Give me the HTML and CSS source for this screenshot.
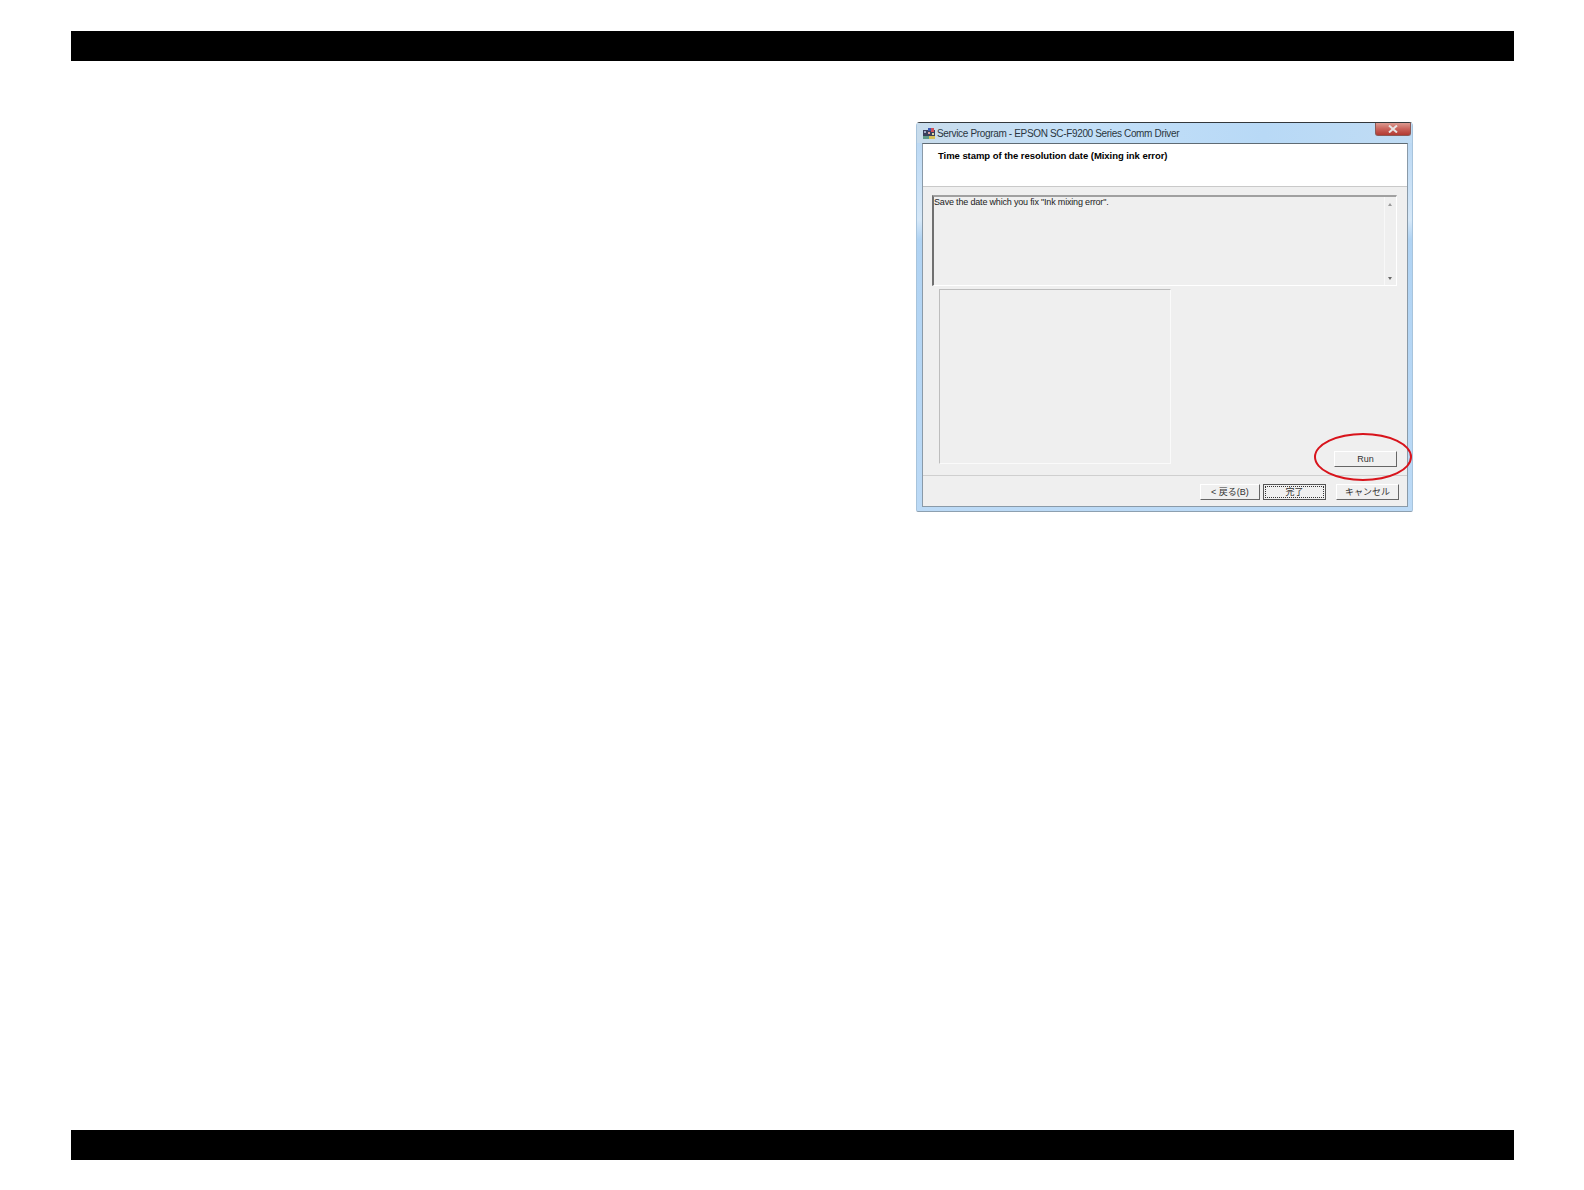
FILE: index.html
```html
<!DOCTYPE html>
<html lang="en">
<head>
    <meta charset="UTF-8">
    <meta name="viewport" content="width=device-width, initial-scale=1.0">
    <title>Service Program</title>
    <link rel="stylesheet" href="styles.css">
</head>
<body>
    <div class="page">
        <div class="black-bar"></div>

        <div class="page-content">
            <div class="dialog">
                <div class="title-bar">
                    <svg class="app-icon" width="12" height="11" viewBox="0 0 12 11">
                        <rect x="0" y="2" width="12" height="6" fill="#3a3f5c"/>
                        <rect x="5" y="0" width="3" height="3" fill="#3a56b0"/>
                        <rect x="8" y="0" width="3" height="4" fill="#d0505a"/>
                        <rect x="1" y="3" width="2" height="2" fill="#9fa8c8"/>
                        <rect x="5" y="4" width="2" height="2" fill="#d8a0a8"/>
                        <rect x="9" y="5" width="2" height="2" fill="#e0d8a0"/>
                        <rect x="0" y="8" width="6" height="3" fill="#5f9a8a"/>
                        <rect x="6" y="8" width="6" height="3" fill="#d4c05a"/>
                    </svg>
                    <span class="title-text">Service Program - EPSON SC-F9200 Series Comm Driver</span>
                    <div class="close-button">
                        <svg width="10" height="8" viewBox="0 0 10 8">
                            <path d="M1 0.5 L9 7.5 M9 0.5 L1 7.5" stroke="#e8e4e4" stroke-width="2" fill="none"/>
                        </svg>
                    </div>
                </div>

                <div class="dialog-body">
                    <div class="dialog-header">Time stamp of the resolution date (Mixing ink error)</div>

                    <div class="dialog-main">
                        <div class="message-box">
                            <div class="message-text">Save the date which you fix "Ink mixing error".</div>
                            <div class="scroll-track">
                                <span class="arrow-up"></span>
                                <span class="arrow-down"></span>
                            </div>
                        </div>

                        <div class="work-row">
                            <div class="group-box"></div>
                            <button class="win-button run-button">Run</button>
                        </div>
                    </div>

                    <div class="dialog-footer">
                        <button class="win-button back-button">&lt; 戻る(B)</button>
                        <button class="win-button default-button"><span class="focus-ring">完了</span></button>
                        <button class="win-button cancel-button">キャンセル</button>
                    </div>
                </div>

                <div class="red-circle"></div>
            </div>
        </div>

        <div class="black-bar"></div>
    </div>
</body>
</html>
```

FILE: styles.css
```css
html, body {
    margin: 0;
    padding: 0;
    background-color: #ffffff;
}

.page {
    width: 1584px;
    height: 1190px;
    box-sizing: border-box;
    padding: 31px 70px 0 71px;
    display: flex;
    flex-direction: column;
    overflow: hidden;
}

.black-bar {
    height: 30px;
    flex: none;
    background-color: #000000;
}

.page-content {
    height: 1069px;
    flex: none;
    box-sizing: border-box;
    padding: 61px 0 0 845px;
}

/* dialog window */
.dialog {
    position: relative;
    width: 497px;
    height: 390px;
    box-sizing: border-box;
    padding: 0 4px 4px 5px;
    display: flex;
    flex-direction: column;
    font-family: "Liberation Sans", Arial, sans-serif;
    color: #222222;
    background: linear-gradient(180deg, #b5d5f3 0%, #d6e8f8 25%, #b0d3f3 30%, #bcdaf6 100%);
    border: 1px solid #a8c4dc;
    border-top-color: #33383c;
    border-bottom-color: #8da0b0;
    border-radius: 4px 4px 2px 2px;
}

.title-bar {
    height: 20px;
    flex: none;
    display: flex;
    align-items: center;
    background: linear-gradient(90deg, #c8dcec 0%, #c4e0f8 30%, #b8d9f6 70%, #c0dcf4 100%);
    margin: 0 -4px 0 -5px;
    padding: 0 1px 0 6px;
}

.app-icon {
    flex: none;
    margin-right: 2px;
}

.title-text {
    font-size: 10px;
    letter-spacing: -0.34px;
    color: #2a3640;
    flex: 1;
    white-space: nowrap;
}

.close-button {
    width: 36px;
    height: 13px;
    box-sizing: border-box;
    flex: none;
    align-self: flex-start;
    display: flex;
    align-items: center;
    justify-content: center;
    background: linear-gradient(180deg, #dc9a90 0%, #c9625a 50%, #b23a32 100%);
    border: 1px solid #8c5a56;
    border-top: none;
    border-radius: 0 0 3px 3px;
}

.dialog-body {
    flex: 1;
    display: flex;
    flex-direction: column;
    background-color: #efefef;
    border: 1px solid #8a9aa8;
    border-top-color: #5f6b74;
    min-height: 0;
}

.dialog-header {
    height: 43px;
    flex: none;
    box-sizing: border-box;
    padding: 6px 0 0 15px;
    font-size: 9.5px;
    font-weight: bold;
    letter-spacing: -0.05px;
    color: #000000;
    background-color: #ffffff;
    border-bottom: 1px solid #c9c9c9;
}

.dialog-main {
    flex: 1;
    box-sizing: border-box;
    padding: 8px 10px 0 9px;
    display: flex;
    flex-direction: column;
    border-bottom: 1px solid #cfcfcf;
}

/* read-only text area */
.message-box {
    height: 91px;
    flex: none;
    box-sizing: border-box;
    display: flex;
    border: 1px solid #ffffff;
    border-top: 2px solid #a0a0a0;
    border-left: 2px solid #707070;
}

.message-text {
    flex: 1;
    font-size: 9px;
    line-height: 10px;
    letter-spacing: -0.18px;
    white-space: nowrap;
}

.scroll-track {
    width: 11px;
    flex: none;
    position: relative;
    border-left: 1px solid #f8f8f8;
}

.arrow-up,
.arrow-down {
    position: absolute;
    left: 3px;
    width: 0;
    height: 0;
    border-left: 2.5px solid transparent;
    border-right: 2.5px solid transparent;
}

.arrow-up {
    top: 6px;
    border-bottom: 3px solid #9a9a9a;
}

.arrow-down {
    bottom: 5px;
    border-top: 3px solid #6a6a6a;
}

.work-row {
    flex: 1;
    margin-top: 3px;
    padding-left: 7px;
    display: flex;
    justify-content: space-between;
    align-items: flex-start;
}

.group-box {
    width: 232px;
    height: 175px;
    box-sizing: border-box;
    border: 1px solid #fafafa;
    border-top-color: #bdbdbd;
    border-left-color: #bdbdbd;
}

/* buttons */
.win-button {
    width: 63px;
    height: 16px;
    flex: none;
    box-sizing: border-box;
    padding: 0;
    font-family: "Liberation Sans", Arial, "Noto Sans CJK JP", sans-serif;
    font-size: 9px;
    line-height: 13px;
    color: #333333;
    background-color: #f0f0f0;
    border: 1px solid #ffffff;
    border-right-color: #666666;
    border-bottom-color: #666666;
}

.run-button {
    align-self: flex-end;
    margin-bottom: 8px;
}

.dialog-footer {
    height: 30px;
    flex: none;
    box-sizing: border-box;
    padding: 8px 8px 0 0;
    display: flex;
    justify-content: flex-end;
    gap: 3px;
}

.back-button {
    width: 60px;
}

.default-button {
    border: 1px solid #555555;
    padding: 1px;
}

.focus-ring {
    display: block;
    height: 100%;
    box-sizing: border-box;
    line-height: 11px;
    border: 1px dotted #333333;
}

.cancel-button {
    margin-left: 7px;
}

/* annotation over the dialog */
.red-circle {
    position: absolute;
    left: 397px;
    top: 310px;
    width: 98px;
    height: 48px;
    box-sizing: border-box;
    border: 2px solid #d8141c;
    border-radius: 50%;
}
```
